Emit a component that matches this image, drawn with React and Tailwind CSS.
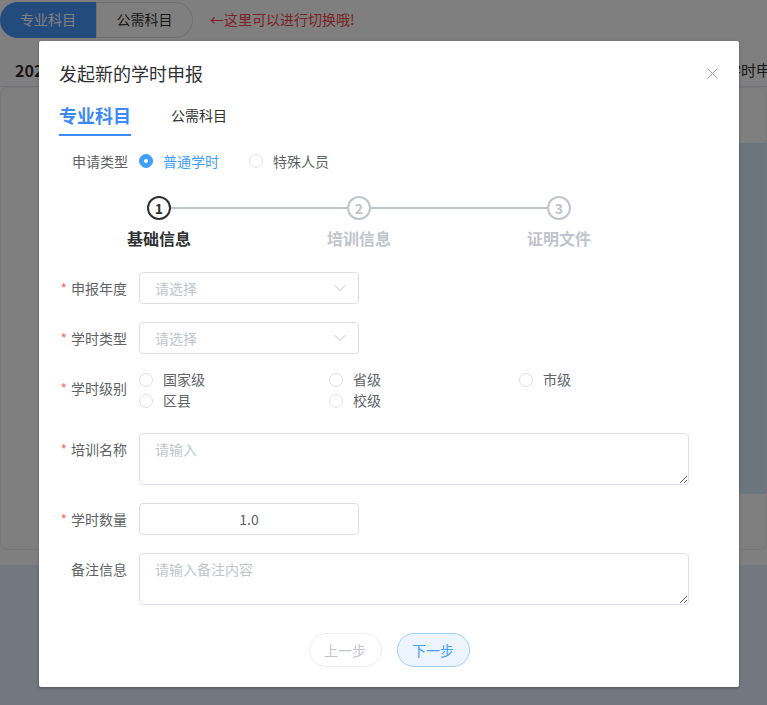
import { ChevronDown, X } from "lucide-react";

const font = { fontFamily: '"Noto Sans CJK SC", "Noto Sans", sans-serif' };

// radio dot, element-ui style
const Radio = ({ checked, label }) => (
  <label className="flex items-center gap-[10px] h-[21px] cursor-pointer">
    <span
      className={`w-[14px] h-[14px] rounded-full flex items-center justify-center border ${
        checked ? "bg-[#409eff] border-[#409eff]" : "bg-white border-[#dcdfe6]"
      }`}
    >
      {checked && <span className="w-[4px] h-[4px] rounded-full bg-white" />}
    </span>
    <span className={`text-[14px] leading-[21px] ${checked ? "text-[#409eff]" : "text-[#606266]"}`}>{label}</span>
  </label>
);

const Label = ({ children, required }) => (
  <div className="w-[80px] shrink-0 pr-3 h-[32px] flex items-center justify-end text-[14px] text-[#606266]">
    {required && <span className="text-[#f56c6c] mr-[4px]">*</span>}
    {children}
  </div>
);

const Select = () => (
  <div className="w-[220px] h-[32px] border border-[#dcdfe6] rounded-[4px] flex items-center justify-between pl-[15px] pr-[8px]">
    <span className="text-[14px] text-[#c0c4cc]">请选择</span>
    <ChevronDown size={20} strokeWidth={1.2} className="text-[#c0c4cc]" />
  </div>
);

const Step = ({ n, active }) => (
  <div
    className={`w-[24px] h-[24px] shrink-0 rounded-full border-2 flex items-center justify-center text-[14px] font-bold leading-none ${
      active ? "border-[#303133] text-[#303133]" : "border-[#c0c4cc] text-[#c0c4cc]"
    }`}
  >
    {n}
  </div>
);

export default function App() {
  return (
    <div className="relative w-[767px] h-[705px] overflow-hidden bg-[#e7eeff]" style={font}>
      {/* page underneath */}
      <div className="bg-white">
        <div className="flex items-center pt-px h-[38px]">
          <div className="w-[96px] h-[36px] rounded-l-full bg-[#4896fa] text-white text-[14px] flex items-center justify-center">
            专业科目
          </div>
          <div className="w-[97px] h-[36px] rounded-r-full border border-[#dcdfe6] text-[#333] text-[14px] flex items-center justify-center">
            公需科目
          </div>
          <span className="ml-[17px] text-[14px] text-[#f5454a]">←这里可以进行切换哦!</span>
        </div>
        <div className="flex items-center h-[49px] pt-[16px] px-[15px] border-b border-[#e4e7ed] whitespace-nowrap">
          <span className="w-[711px] shrink-0 text-[16px] font-bold text-[#303133]">2024年度学时申报</span>
          <span className="text-[15px] text-[#333]">学时申报记录</span>
        </div>
        <div className="pb-[15px]">
          <div className="border border-[#ebeef5] rounded-[8px] h-[463px] flex flex-col">
            <div className="h-[55px]" />
            <div className="h-[351px] flex">
              <div className="flex-1" />
              <div className="w-[260px] bg-[#d6eafc]" />
            </div>
          </div>
        </div>
      </div>

      {/* overlay */}
      <div className="absolute inset-0 bg-black/50" />

      {/* dialog */}
      <div className="absolute left-[39px] top-[41px] w-[700px] h-[646px] bg-white rounded-[2px] shadow-[0_1px_3px_rgba(0,0,0,0.3)]">
        <div className="flex items-center justify-between px-5 pt-5 pb-[10px]">
          <span className="text-[18px] leading-[24px] text-[#303133]">发起新的学时申报</span>
          <X size={19} strokeWidth={1.1} className="text-[#909399] mr-[-3px]" />
        </div>

        <div className="px-5">
          {/* tabs */}
          <div className="flex items-end gap-[40px] h-[40px] mt-px">
            <div className="h-full flex flex-col justify-center border-b-2 border-[#3d8af7] text-[18px] font-bold text-[#3d8af7]">
              专业科目
            </div>
            <div className="h-full flex items-center pb-[2px] text-[14px] text-[#303133]">公需科目</div>
          </div>

          {/* type */}
          <div className="flex items-center h-[30px] mt-[10px]">
            <span className="w-[80px] pl-[13px] text-[14px] text-[#606266]">申请类型</span>
            <div className="flex gap-[30px]">
              <Radio checked label="普通学时" />
              <Radio label="特殊人员" />
            </div>
          </div>

          {/* steps */}
          <div className="w-[600px] mt-[20px]">
            <div className="flex items-center pl-[88px]">
              <Step n="1" active />
              <div className="flex-1 h-[2px] bg-[#c0c4cc]" />
              <Step n="2" />
              <div className="flex-1 h-[2px] bg-[#c0c4cc]" />
              <Step n="3" />
              <div className="w-[88px]" />
            </div>
            <div className="grid grid-cols-3 mt-[6px] text-[16px] font-bold text-center">
              <span className="text-[#303133]">基础信息</span>
              <span className="text-[#c0c4cc]">培训信息</span>
              <span className="text-[#c0c4cc]">证明文件</span>
            </div>
          </div>

          {/* form */}
          <div className="mt-[22px] flex flex-col gap-[18px]">
            <div className="flex">
              <Label required>申报年度</Label>
              <Select />
            </div>
            <div className="flex">
              <Label required>学时类型</Label>
              <Select />
            </div>
            <div className="flex h-[43px]">
              <Label required>学时级别</Label>
              <div className="grid grid-cols-[190px_190px_190px] auto-rows-[21px] content-start -mt-[3px]">
                <Radio label="国家级" />
                <Radio label="省级" />
                <Radio label="市级" />
                <Radio label="区县" />
                <Radio label="校级" />
              </div>
            </div>
            <div className="flex">
              <Label required>培训名称</Label>
              <textarea
                readOnly
                placeholder="请输入"
                className="w-[550px] h-[52px] border border-[#dcdfe6] rounded-[4px] px-[15px] py-[5px] text-[14px] outline-none placeholder:text-[#c0c4cc]"
              />
            </div>
            <div className="flex">
              <Label required>学时数量</Label>
              <input
                readOnly
                value="1.0"
                className="w-[220px] h-[32px] border border-[#dcdfe6] rounded-[4px] text-center text-[14px] text-[#606266] outline-none"
              />
            </div>
            <div className="flex">
              <Label>备注信息</Label>
              <textarea
                readOnly
                placeholder="请输入备注内容"
                className="w-[550px] h-[52px] border border-[#dcdfe6] rounded-[4px] px-[15px] py-[5px] text-[14px] outline-none placeholder:text-[#c0c4cc]"
              />
            </div>
          </div>

          {/* buttons */}
          <div className="flex justify-center gap-[15px] mt-[28px]">
            <button className="w-[73px] h-[34px] rounded-full border border-[#ebeef5] bg-white text-[14px] text-[#c0c4cc]">
              上一步
            </button>
            <button className="w-[73px] h-[34px] rounded-full border border-[#a0cfff] bg-[#ecf5ff] text-[14px] text-[#409eff]">
              下一步
            </button>
          </div>
        </div>
      </div>
    </div>
  );
}
